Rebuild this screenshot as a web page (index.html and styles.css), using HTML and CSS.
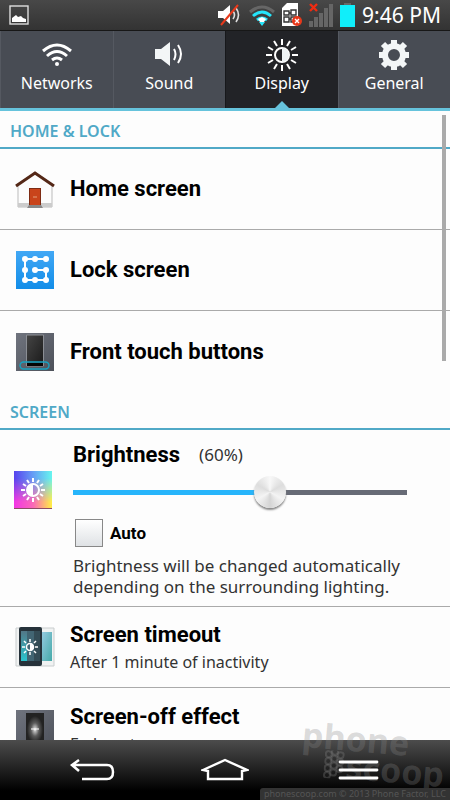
FILE: index.html
```html
<!DOCTYPE html>
<html lang="en">
<head>
  <meta charset="UTF-8">
  <meta name="viewport" content="width=device-width, initial-scale=1">
  <title>Settings - Display</title>
  <link rel="stylesheet" href="styles.css">
</head>
<body>

  <header class="status-bar">
    <svg class="shot" width="20" height="20" viewBox="0 0 20 20">
      <rect x="1" y="1" width="18" height="18" fill="none" stroke="#ddd" stroke-width="1.4"/>
      <path d="M3 17v-4l4-3 2 2 3-1 2 2 3 1v3z" fill="#fff"/>
    </svg>
    <div class="status-icons">
      <svg width="24" height="24" viewBox="0 0 24 24">
        <path d="M0 8h5l7-6v19l-7-6H0z" fill="#fff"/>
        <path d="M15 8q3 4 0 8M18 5q5 7 0 14" fill="none" stroke="#ddd" stroke-width="1.6"/>
        <path d="M3 22L20 2" stroke="#e8391b" stroke-width="2"/>
      </svg>
      <svg width="26" height="24" viewBox="0 0 26 24">
        <g fill="none" stroke-width="3">
          <path d="M1 9q12-10 24 0" stroke="#666"/>
          <path d="M4 13q9-8 18 0" stroke="#24e5fb"/>
          <path d="M8 17q5-4 10 0" stroke="#24e5fb"/>
        </g>
        <path d="M9 16l4-2 4 2-4 6z" fill="#fff"/>
        <path d="M10 19h6l-3 4z" fill="#24e5fb"/>
      </svg>
      <svg width="20" height="24" viewBox="0 0 20 24">
        <path d="M5 0h11v23H0V5z" fill="#fff"/>
        <path d="M2 8h5v4H2zM9 7h5v5H9zM2 14h5v5H2zM9 14h5v5H9zM7 10h2M7 16h2" fill="none" stroke="#333" stroke-width="1.4"/>
        <circle cx="15" cy="18" r="5" fill="#e8391b"/>
        <path d="M13 16l4 4M17 16l-4 4" stroke="#fff" stroke-width="1.4"/>
      </svg>
      <svg width="24" height="24" viewBox="0 0 24 24">
        <path d="M0 18h4v6H0zM5 14h4v10H5zM10 10h4v14h-4zM15 5h4v19h-4zM20 1h4v23h-4z" fill="#666"/>
        <path d="M1 1l7 7M8 1L1 8" stroke="#f02c12" stroke-width="2.4"/>
      </svg>
      <svg class="battery" width="15" height="24" viewBox="0 0 15 24">
        <path d="M4 0h7v3H4z" fill="#666"/>
        <path d="M0 2h15v22H0z" fill="#10eefa"/>
      </svg>
      <span class="clock">9:46 PM</span>
    </div>
  </header>

  <nav class="tabs">
    <a class="tab" href="#networks">
      <svg width="32" height="32" viewBox="0 0 32 32">
        <g fill="none" stroke="#fff" stroke-width="3">
          <path d="M2 12q14-12 28 0"/>
          <path d="M6 17q10-9 20 0"/>
          <path d="M11 21q5-4 10 0"/>
        </g>
        <circle cx="16" cy="25" r="2" fill="#fff"/>
      </svg>
      <span>Networks</span>
    </a>
    <a class="tab" href="#sound">
      <svg width="32" height="32" viewBox="0 0 32 32">
        <path d="M2 10h6l9-7v24l-9-7H2z" fill="#f3f6f7"/>
        <path d="M21 10q3 5 0 11M25 6q6 9 0 18" fill="none" stroke="#fff" stroke-width="2"/>
      </svg>
      <span>Sound</span>
    </a>
    <a class="tab active" href="#display">
      <svg width="32" height="32" viewBox="0 0 32 32">
        <circle cx="16" cy="16" r="7" fill="none" stroke="#fff" stroke-width="2"/>
        <path d="M16 9a7 7 0 0 1 0 14z" fill="#eef3f5"/>
        <path d="M16 0v6M16 26v6M0 16h6M26 16h6M8 2l3 5M21 25l3 5M24 2l-3 5M11 25l-3 5M2 8l5 3M25 21l5 3M30 8l-5 3M7 21l-5 3" stroke="#fff" stroke-width="2"/>
      </svg>
      <span>Display</span>
    </a>
    <a class="tab" href="#general">
      <svg width="32" height="32" viewBox="0 0 32 32">
        <circle cx="16" cy="16" r="9" fill="none" stroke="#f3f6f7" stroke-width="6"/>
        <path d="M16 1v5M16 26v5M1 16h5M26 16h5M5 5l4 4M23 23l4 4M27 5l-4 4M9 23l-4 4" stroke="#f3f6f7" stroke-width="6"/>
      </svg>
      <span>General</span>
    </a>
  </nav>

  <main class="settings">
    <h2>HOME &amp; LOCK</h2>
    <a class="row" href="#home">
      <svg class="icon" width="40" height="40" viewBox="0 0 40 40">
        <path d="M3 15L20 3l17 12v23H3z" fill="#fcfcfc" stroke="#bbb" stroke-width="1"/>
        <path d="M3 34h34v4H3z" fill="#ccc"/>
        <path d="M1 17L20 4l19 13" fill="none" stroke="#542817" stroke-width="3"/>
        <path d="M14 19h12v17H14z" fill="#7d2b13"/>
        <path d="M15 20h10v16H15z" fill="#c9441b"/>
        <path d="M18 28h4" stroke="#e4a07d" stroke-width="1"/>
        <path d="M14 36h12l2 3H12z" fill="#888"/>
      </svg>
      <strong>Home screen</strong>
    </a>
    <a class="row" href="#lock">
      <svg class="icon" width="40" height="40" viewBox="0 0 40 40">
        <defs>
          <linearGradient id="blue" x2="0" y2="1"><stop stop-color="#42a8f5"/><stop offset="1" stop-color="#128de8"/></linearGradient>
        </defs>
        <path d="M1 1h38v38H1z" fill="url(#blue)"/>
        <path d="M31 9H10v21h21V20H20" fill="none" stroke="#fff" stroke-width="2"/>
        <path d="M10 9h.01M20 9h.01M31 9h.01M10 20h.01M20 20h.01M31 20h.01M10 30h.01M20 30h.01M31 30h.01" stroke="#fff" stroke-width="6" stroke-linecap="round"/>
      </svg>
      <strong>Lock screen</strong>
    </a>
    <a class="row last" href="#buttons">
      <svg class="icon" width="40" height="40" viewBox="0 0 40 40">
        <defs>
          <linearGradient id="slate" x2="1" y2="1"><stop stop-color="#70747e"/><stop offset="1" stop-color="#4d515a"/></linearGradient>
          <linearGradient id="dark" x2="1" y2="1"><stop stop-color="#454545"/><stop offset="1" stop-color="#191919"/></linearGradient>
        </defs>
        <path d="M1 1h38v38H1z" fill="url(#slate)"/>
        <path d="M11.5 3h17v31h-17z" fill="url(#dark)" stroke="#8b8e94" stroke-width="1"/>
        <path d="M12 31h16v3H12z" fill="#050505"/>
        <rect x="5" y="30" width="29" height="7" rx="3.5" fill="none" stroke="#16a3c2" stroke-width="1.4"/>
      </svg>
      <strong>Front touch buttons</strong>
    </a>

    <h2>SCREEN</h2>
    <section class="brightness">
      <svg class="icon" width="40" height="40" viewBox="0 0 40 40">
        <defs>
          <linearGradient id="sky" x2="1" y2="0"><stop stop-color="#5742ee"/><stop offset=".5" stop-color="#669df5"/><stop offset="1" stop-color="#67f5ee"/></linearGradient>
          <linearGradient id="warm" x2="1" y2="0"><stop stop-color="#f235e5"/><stop offset=".5" stop-color="#fa68b7"/><stop offset="1" stop-color="#ffef45"/></linearGradient>
          <linearGradient id="fade" x2="0" y2="1"><stop offset=".2" stop-color="#000"/><stop offset=".8" stop-color="#fff"/></linearGradient>
          <mask id="lower"><path d="M0 0h40v40H0z" fill="url(#fade)"/></mask>
        </defs>
        <path d="M1 1h38v38H1z" fill="url(#sky)"/>
        <path d="M1 1h38v38H1z" fill="url(#warm)" mask="url(#lower)"/>
        <path d="M1 38.5h38" stroke="#8d4b65" stroke-width="1"/>
        <g stroke="#fff" fill="none" stroke-width="2">
          <circle cx="20" cy="20" r="6"/>
          <path d="M20 8v4M20 28v4M8 20h4M28 20h4M14 10l2 3M24 27l2 3M26 10l-2 3M16 27l-2 3M10 14l3 2M27 24l3 2M30 14l-3 2M13 24l-3 2"/>
        </g>
        <path d="M20 14a6 6 0 0 0 0 12z" fill="#fff"/>
      </svg>
      <div class="controls">
        <label class="level" for="level"><strong>Brightness</strong><span>(60%)</span></label>
        <input type="range" id="level" min="0" max="100" value="60">
        <label class="auto"><input type="checkbox"> Auto</label>
        <p>Brightness will be changed automatically depending on the surrounding lighting.</p>
      </div>
    </section>
    <a class="row" href="#timeout">
      <svg class="icon" width="40" height="40" viewBox="0 0 40 40">
        <defs>
          <linearGradient id="teal" x2="1" y2="1"><stop stop-color="#94c9df"/><stop offset="1" stop-color="#45aaa9"/></linearGradient>
          <linearGradient id="glass" x2="0" y2="1"><stop stop-color="#527787"/><stop offset="1" stop-color="#2bc4ce"/></linearGradient>
        </defs>
        <path d="M1 1h38v38H1z" fill="#f0f2f2" stroke="#c9cdce" stroke-width="1"/>
        <path d="M27 5h10v29H27z" fill="url(#teal)"/>
        <rect x="4" y="0" width="23" height="39" rx="2" fill="#26323a"/>
        <path d="M6 4h19v30H6z" fill="#426573"/>
        <path d="M6 4h6v30H6z" fill="url(#glass)"/>
        <path d="M19 4h6v30h-6z" fill="#344c56"/>
        <g stroke="#fff" fill="none" stroke-width="1.5">
          <circle cx="15" cy="20" r="3.5"/>
          <path d="M15 12v3M15 25v3M7 20h3M20 20h3M9 14l2 2M19 24l2 2M21 14l-2 2M11 24l-2 2"/>
        </g>
        <path d="M15 16.5a3.5 3.5 0 0 1 0 7z" fill="#fff"/>
      </svg>
      <span class="text"><strong>Screen timeout</strong><span>After 1 minute of inactivity</span></span>
    </a>
    <a class="row last" href="#effect">
      <svg class="icon" width="40" height="40" viewBox="0 0 40 40">
        <defs>
          <radialGradient id="glow"><stop stop-color="#fff"/><stop offset=".15" stop-color="#bbb"/><stop offset=".5" stop-color="#5a5a5a"/><stop offset="1" stop-color="#222"/></radialGradient>
        </defs>
        <path d="M1 1h38v38H1z" fill="url(#slate)"/>
        <path d="M11 4h18v35H11z" fill="#222"/>
        <path d="M12 7h16v27H12z" fill="url(#glow)"/>
        <path d="M16 20h8" stroke="#fff" stroke-width="1"/>
      </svg>
      <span class="text"><strong>Screen-off effect</strong><span>Fade out</span></span>
    </a>
    <div class="scrollbar"></div>
  </main>

  <footer class="nav-bar">
    <button aria-label="Back">
      <svg width="48" height="30" viewBox="0 0 48 30">
        <path d="M11 5l-7 5 7 6M4 10h35q6 0 6 7t-6 7H14" fill="none" stroke="#fff" stroke-width="2.5"/>
      </svg>
    </button>
    <button aria-label="Home">
      <svg width="48" height="30" viewBox="0 0 48 30">
        <path d="M2 15L24 5l22 10-5 1v8H7v-8z" fill="none" stroke="#fff" stroke-width="2.4"/>
      </svg>
    </button>
    <button aria-label="Menu">
      <svg width="48" height="30" viewBox="0 0 48 30">
        <path d="M6 7h37M6 15h37M6 23h37" stroke="#fff" stroke-width="2.8" stroke-linecap="round"/>
      </svg>
    </button>
  </footer>

  <div class="watermark">
    <span>phone</span>
    <span class="scoop">
      <svg width="20" height="28" viewBox="0 0 20 28">
        <g fill="none" stroke="currentColor" stroke-width="2">
          <circle cx="4" cy="4" r="3"/><circle cx="10" cy="1" r="3"/><circle cx="16" cy="4" r="3"/>
          <circle cx="4" cy="11" r="3"/><circle cx="10" cy="8" r="3"/><circle cx="16" cy="11" r="3"/>
          <circle cx="4" cy="18" r="3"/><circle cx="10" cy="15" r="3"/><circle cx="16" cy="18" r="3"/>
          <circle cx="4" cy="25" r="3"/><circle cx="10" cy="22" r="3"/>
        </g>
      </svg>
      scoop
    </span>
  </div>
  <small class="copyright">phonescoop.com © 2013 Phone Factor, LLC</small>

</body>
</html>
```
FILE: styles.css
```css
* {
  box-sizing: border-box;
}

body {
  margin: 0;
  height: 100vh;
  display: flex;
  flex-direction: column;
  position: relative;
  overflow: hidden;
  font-family: 'Noto Sans', sans-serif;
  background: #fdfdfd;
  color: #000;
}

a {
  color: inherit;
  text-decoration: none;
}

svg {
  display: block;
  flex: none;
}

.status-bar {
  display: flex;
  justify-content: space-between;
  align-items: center;
  height: 31px;
  padding: 0 9px;
  background: linear-gradient(#484848, #333);
  border-bottom: 1px solid #171717;
}

.status-icons {
  display: flex;
  align-items: center;
  gap: 7px;
}

.clock {
  font-size: 21px;
  line-height: 30px;
  color: #fff;
}

.tabs {
  display: flex;
  height: 80px;
  border-bottom: 3px solid #66c3dc;
}

.tab {
  flex: 1;
  display: flex;
  flex-direction: column;
  align-items: center;
  gap: 1px;
  padding-top: 8px;
  background: #484c54;
  border-left: 1px solid #555961;
  color: #fff;
  font-size: 16px;
  line-height: 22px;
}

.tab.active {
  position: relative;
  background: #222327;
  border-color: #17181b;
}

.tab.active::after {
  content: "";
  position: absolute;
  bottom: 0;
  border: 7px solid transparent;
  border-top: 0;
  border-bottom-color: #66c3dc;
}

.settings {
  flex: 1;
  min-height: 0;
  overflow: hidden;
  position: relative;
}

h2 {
  margin: 0;
  height: 38px;
  padding: 8px 10px 0;
  border-bottom: 2px solid #50a9c7;
  color: #50a9c7;
  font-size: 16px;
  font-weight: 600;
  line-height: 24px;
}

.row {
  display: flex;
  align-items: center;
  gap: 15px;
  height: 81px;
  padding-left: 15px;
  border-bottom: 1px solid #aaa;
}

.row.last {
  border-bottom: 0;
}

.row strong,
.level strong {
  font-family: Roboto, sans-serif;
  font-size: 22px;
  font-weight: 700;
  line-height: 30px;
}

.text {
  display: flex;
  flex-direction: column;
}

.text span {
  color: #333;
  font-size: 16px;
  line-height: 24px;
}

.brightness {
  display: flex;
  gap: 20px;
  height: 177px;
  padding: 0 43px 0 13px;
  border-bottom: 1px solid #aaa;
}

.brightness .icon {
  margin-top: 40px;
}

.controls {
  flex: 1;
  padding-top: 10px;
}

.level {
  display: flex;
  align-items: center;
  gap: 19px;
}

.level span {
  color: #333;
  font-size: 17px;
  line-height: 30px;
}

input[type="range"] {
  -webkit-appearance: none;
  appearance: none;
  display: block;
  width: 100%;
  height: 34px;
  margin: 5px 0 10px;
  background: linear-gradient(to right, #27b5fb 60%, #676b76 60%) center / 100% 5px no-repeat;
}

input[type="range"]::-webkit-slider-thumb {
  -webkit-appearance: none;
  width: 32px;
  height: 32px;
  border-radius: 50%;
  background: conic-gradient(#f8f8f8, #ddd, #f4f4f4, #d4d4d4, #f4f4f4, #ddd, #f8f8f8);
  box-shadow: 0 2px 2px #888;
}

.auto {
  display: flex;
  align-items: center;
  gap: 7px;
  font-family: Roboto, sans-serif;
  font-size: 17px;
  font-weight: 700;
}

input[type="checkbox"] {
  -webkit-appearance: none;
  appearance: none;
  width: 28px;
  height: 28px;
  margin: 0 0 0 2px;
  border: 1px solid #888;
  background: linear-gradient(#fff, #dfe2e5);
}

.controls p {
  margin: 8px 0 0;
  color: #333;
  font-size: 17px;
  line-height: 21px;
}

.scrollbar {
  position: absolute;
  top: 4px;
  right: 4px;
  width: 4px;
  height: 246px;
  background: #aaa;
}

.nav-bar {
  display: flex;
  justify-content: center;
  gap: 85px;
  height: 60px;
  background: linear-gradient(#4c4c4c, #000 85%);
}

.nav-bar button {
  position: relative;
  z-index: 1;
  padding: 0;
  border: 0;
  background: none;
}

.watermark {
  position: absolute;
  right: 4px;
  bottom: 18px;
  display: flex;
  flex-direction: column;
  color: rgba(135, 135, 135, 0.3);
  font-size: 34px;
  font-weight: 700;
  line-height: 28px;
  transform: rotate(5deg);
  pointer-events: none;
}

.scoop {
  display: flex;
  gap: 2px;
  padding-left: 24px;
}

.copyright {
  position: absolute;
  right: 0;
  bottom: 0;
  padding: 0 4px;
  border-radius: 3px 0 0;
  background: #333;
  color: #555;
  font-size: 9px;
  line-height: 12px;
}
```
